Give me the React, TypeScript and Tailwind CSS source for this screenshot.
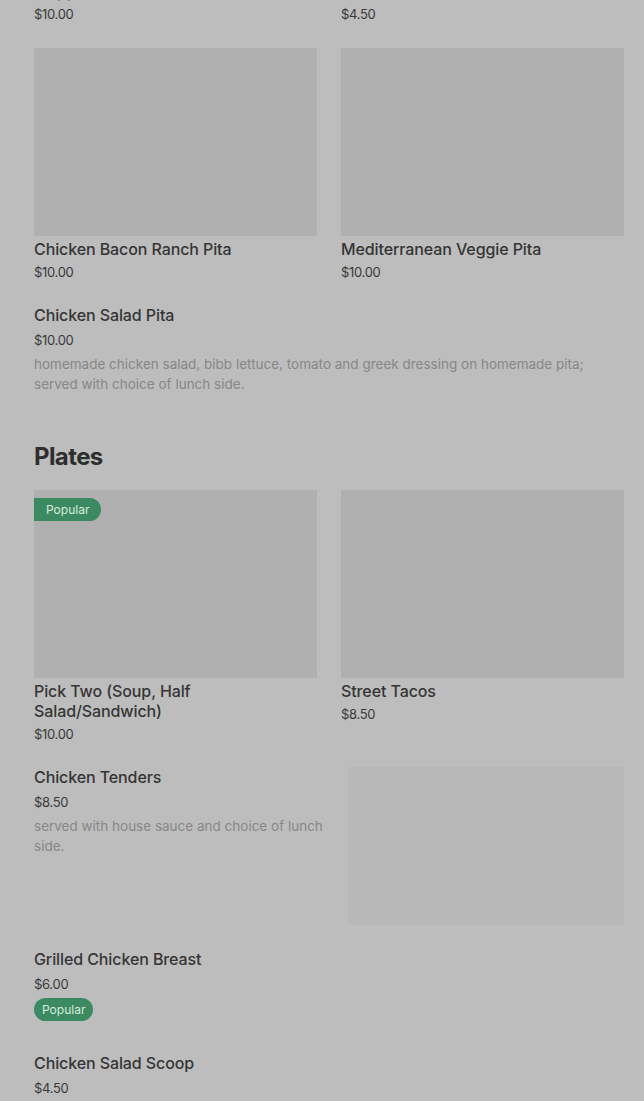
import React from "react";

type Card = { title: string; price: string; popular?: boolean; titleClass?: string };

function Badge({ half }: { half?: boolean }) {
  return (
    <span
      className={
        "inline-flex h-[23px] items-center bg-[#3b8a62] text-[12px] text-[#d8ebdf] " +
        (half ? "rounded-r-full pl-[12px] pr-[12px]" : "rounded-full px-[8px]")
      }
    >
      Popular
    </span>
  );
}

function GridCard({ item }: { item: Card }) {
  return (
    <div className="flex flex-col">
      <div className="relative h-[188px] bg-[#b0b0b0]">
        {item.popular && (
          <div className="absolute left-0 top-[8px] flex">
            <Badge half />
          </div>
        )}
      </div>
      <div className={"mt-[3px] text-[16px] leading-[20px] font-medium tracking-[-0.1px] text-[#353535] " + (item.titleClass || "")}>
        {item.title}
      </div>
      <div className="mt-[4px] text-[13px] leading-[18px] tracking-[-0.3px] text-[#3a3a3a]">{item.price}</div>
    </div>
  );
}

function ListItem({
  title,
  price,
  desc,
  popular,
}: {
  title: string;
  price: string;
  desc?: string;
  popular?: boolean;
}) {
  return (
    <div className="flex flex-col">
      <div className="text-[16px] leading-[20px] font-medium tracking-[-0.1px] text-[#353535]">{title}</div>
      <div className="mt-[6px] text-[13px] leading-[18px] tracking-[-0.3px] text-[#3a3a3a]">{price}</div>
      {desc && (
        <div className="mt-[5px] text-[13.5px] leading-[20px] text-[#878787]">{desc}</div>
      )}
      {popular && (
        <div className="mt-[5px] flex">
          <Badge />
        </div>
      )}
    </div>
  );
}

export default function App() {
  return (
    <div
      className="min-h-[1101px] overflow-hidden bg-[#bdbdbd] pl-[34px] pr-[20px]"
      style={{ fontFamily: "Inter, 'Liberation Sans', sans-serif" }}
    >
      {/* top row, cut off at the top edge */}
      <div className="mt-[-19px] grid grid-cols-2 gap-x-[24px]">
        <div>
          <div className="text-[16px] leading-[20px] font-medium tracking-[-0.1px] text-[#353535]">Veggie Wrap</div>
          <div className="mt-[4px] text-[13px] leading-[18px] tracking-[-0.3px] text-[#3a3a3a]">$10.00</div>
        </div>
        <div>
          <div className="text-[16px] leading-[20px] font-medium tracking-[-0.1px] text-[#353535]">Side Salad</div>
          <div className="mt-[4px] text-[13px] leading-[18px] tracking-[-0.3px] text-[#3a3a3a]">$4.50</div>
        </div>
      </div>

      <div className="mt-[25px] grid grid-cols-2 gap-x-[24px]">
        <GridCard item={{ title: "Chicken Bacon Ranch Pita", price: "$10.00" }} />
        <GridCard item={{ title: "Mediterranean Veggie Pita", price: "$10.00" }} />
      </div>

      <div className="mt-[24px]">
        <ListItem
          title="Chicken Salad Pita"
          price="$10.00"
          desc="homemade chicken salad, bibb lettuce, tomato and greek dressing on homemade pita; served with choice of lunch side."
        />
      </div>

      <h2 className="mt-[47px] text-[24px] leading-[32px] font-bold tracking-[-0.6px] text-[#2e2e2e]">Plates</h2>

      <div className="mt-[17px] grid grid-cols-2 gap-x-[24px]">
        <GridCard
          item={{
            title: "Pick Two (Soup, Half Salad/Sandwich)",
            price: "$10.00",
            popular: true,
            titleClass: "max-w-[200px]",
          }}
        />
        <GridCard item={{ title: "Street Tacos", price: "$8.50" }} />
      </div>

      <div className="mt-[24px] flex gap-[24px]">
        <div className="flex-1">
          <ListItem
            title="Chicken Tenders"
            price="$8.50"
            desc="served with house sauce and choice of lunch side."
          />
        </div>
        <div className="h-[158px] w-[276px] shrink-0 bg-[#b8b8b8]" />
      </div>

      <div className="mt-[24px]">
        <ListItem title="Grilled Chicken Breast" price="$6.00" popular />
      </div>

      <div className="mt-[32px]">
        <ListItem title="Chicken Salad Scoop" price="$4.50" />
      </div>
    </div>
  );
}
